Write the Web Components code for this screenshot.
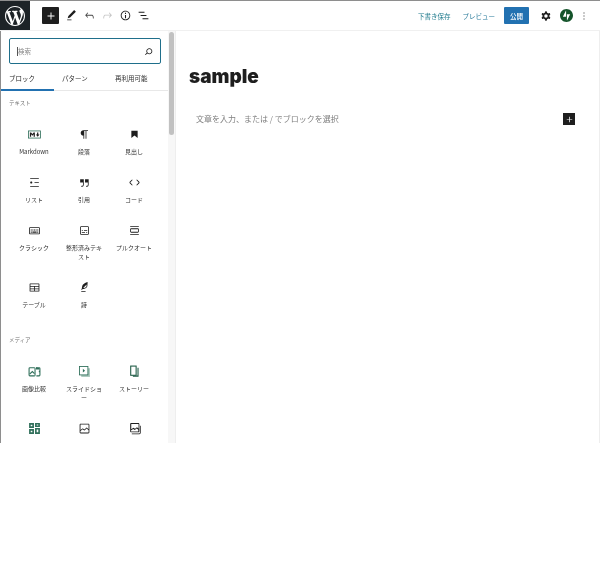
<!DOCTYPE html>
<html lang="ja">
<head>
<meta charset="utf-8">
<title>sample</title>
<style>
html,body{margin:0;padding:0;background:#fff}
body{font-family:"Liberation Sans","Noto Sans CJK JP",sans-serif;color:#1e1e1e}
</style>
</head>
<body>
<wp-editor-app></wp-editor-app>
<script>
const PATHS={
plus:'M18 11.2h-5.2V6h-1.6v5.2H6v1.6h5.2V18h1.6v-5.2H18z',
pencil:'M20.1 5.1L16.9 2 6.2 12.7l-1.3 4.4 4.5-1.3L20.1 5.1zM4 20.8h8v-1.5H4v1.5z',
undo:'M18.3 11.7c-.6-.6-1.4-.9-2.3-.9H6.7l2.9-3.3-1.1-1-4.5 5L8.5 16l1-1-2.7-2.7H16c.5 0 .9.2 1.3.5 1 1 1 3.4 1 4.5v.3h1.5v-.2c0-1.5 0-4.3-1.5-5.7z',
redo:'M15.6 6.5l-1.1 1 2.9 3.3H8c-.9 0-1.7.3-2.3.9-1.4 1.5-1.4 4.2-1.4 5.6v.2h1.5v-.3c0-1.1 0-3.5 1-4.5.3-.3.7-.5 1.3-.5h9.2L14.5 15l1.1 1.1 4.6-4.6-4.6-5z',
info:'M12 3.2c-4.8 0-8.8 3.9-8.8 8.8 0 4.8 3.9 8.8 8.8 8.8 4.8 0 8.8-3.9 8.8-8.8 0-4.8-4-8.8-8.8-8.8zm0 16c-4 0-7.2-3.3-7.2-7.2C4.8 8 8 4.8 12 4.8s7.2 3.3 7.2 7.2c0 4-3.2 7.2-7.2 7.2zM11 17h2v-6h-2v6zm0-8h2V7h-2v2z',
listview:'M13.8 5.2H3v1.5h10.8V5.2zm-3.6 12v1.5H21v-1.5H10.2zm7.2-6H6.6v1.5h10.8v-1.5z',
cog:'M10.289 4.836A1 1 0 0111.275 4h1.306a1 1 0 01.987.836l.244 1.466c.787.26 1.503.679 2.108 1.218l1.393-.522a1 1 0 011.216.437l.653 1.13a1 1 0 01-.23 1.273l-1.148.944a6.025 6.025 0 010 2.435l1.149.946a1 1 0 01.23 1.272l-.653 1.13a1 1 0 01-1.216.437l-1.394-.522c-.605.54-1.32.958-2.108 1.218l-.244 1.466a1 1 0 01-.987.836h-1.306a1 1 0 01-.986-.836l-.244-1.466a5.995 5.995 0 01-2.108-1.218l-1.394.522a1 1 0 01-1.217-.436l-.653-1.131a1 1 0 01.23-1.272l1.149-.946a6.026 6.026 0 010-2.435l-1.148-.944a1 1 0 01-.23-1.272l.653-1.131a1 1 0 011.217-.437l1.393.522a5.994 5.994 0 012.108-1.218l.244-1.466zM14.929 12a3 3 0 11-6 0 3 3 0 016 0z',
dots:'M13 19h-2v-2h2v2zm0-6h-2v-2h2v2zm0-6h-2V5h2v2z',
search:'M13.5 6C10.5 6 8 8.5 8 11.5c0 1.1.3 2.1.9 3l-3.4 3 1 1.1 3.4-2.9c1 .9 2.2 1.4 3.6 1.4 3 0 5.5-2.5 5.5-5.5C19 8.5 16.5 6 13.5 6zm0 9.5c-2.2 0-4-1.8-4-4s1.8-4 4-4 4 1.8 4 4-1.8 4-4 4z',
paragraph:'M9.99609 14v-.2251l.00391.0001v6.225h1.5v-14.5h2.5v14.5h1.5v-14.5h3v-1.5h-8.50391c-2.76142 0-5 2.23858-5 5 0 2.7614 2.23858 5 5 5z',
heading:'M6.2 5.2v13.4l5.8-4.8 5.8 4.8V5.2z',
list:'M4 4v1.5h16V4H4zm8 8.5h8V11h-8v1.5zM4 20h16v-1.5H4V20zm4-8c0-1.1-.9-2-2-2s-2 .9-2 2 .9 2 2 2 2-.9 2-2z',
quote:'M13 6v6h5.2v4c0 .8-.2 1.4-.5 1.7-.6.6-1.6.6-2.5.5h-.3v1.5h.5c1 0 2.3-.1 3.3-1 .6-.6 1-1.6 1-2.8V6H13zm-9 6h5.2v4c0 .8-.2 1.4-.5 1.7-.6.6-1.6.6-2.5.5h-.3v1.5h.5c1 0 2.3-.1 3.3-1 .6-.6 1-1.6 1-2.8V6H4v6z',
code:'M20.8 10.7l-4.3-4.3-1.1 1.1 4.3 4.3c.1.1.1.3 0 .4l-4.3 4.3 1.1 1.1 4.3-4.3c.7-.8.7-1.9 0-2.6zM4.2 11.8l4.3-4.3-1-1-4.3 4.3c-.7.7-.7 1.8 0 2.5l4.3 4.3 1.1-1.1-4.3-4.3c-.2-.1-.2-.3-.1-.4z',
classic:'M20 6H4c-1.1 0-2 .9-2 2v9c0 1.1.9 2 2 2h16c1.1 0 2-.9 2-2V8c0-1.1-.9-2-2-2zm.5 11c0 .3-.2.5-.5.5H4c-.3 0-.5-.2-.5-.5V8c0-.3.2-.5.5-.5h16c.3 0 .5.2.5.5v9zM10 10H8v2h2v-2zm-5 2h2v-2H5v2zm8-2h-2v2h2v-2zm-5 6h8v-2H8v2zm6-4h2v-2h-2v2zm3 0h2v-2h-2v2zm0 4h2v-2h-2v2zM5 16h2v-2H5v2z',
preformatted:'M18 4H6c-1.1 0-2 .9-2 2v12c0 1.1.9 2 2 2h12c1.1 0 2-.9 2-2V6c0-1.1-.9-2-2-2zm.5 14c0 .3-.2.5-.5.5H6c-.3 0-.5-.2-.5-.5V6c0-.3.2-.5.5-.5h12c.3 0 .5.2.5.5v12zM7 16.5h6V15H7v1.5zm4-4h6V11h-6v1.5zM9 11H7v1.5h2V11zm6 5.5h2V15h-2v1.5z',
pullquote:'M18 8H6c-1.1 0-2 .9-2 2v4c0 1.1.9 2 2 2h12c1.1 0 2-.9 2-2v-4c0-1.1-.9-2-2-2zm.5 6c0 .3-.2.5-.5.5H6c-.3 0-.5-.2-.5-.5v-4c0-.3.2-.5.5-.5h12c.3 0 .5.2.5.5v4zM4 4v1.5h16V4H4zm0 16h16v-1.5H4V20z',
table:'M4 4.5h16c.6 0 1 .4 1 1v13c0 .6-.4 1-1 1H4c-.6 0-1-.4-1-1v-13c0-.6.4-1 1-1zm.5 1.5v3h15V6h-15zm0 4.5v3.2h6.7v-3.2H4.500zm8.200 0v3.200h6.800v-3.200h-6.800zm-8.200 4.700V18h6.700v-2.800H4.500zm8.200 0V18h6.800v-2.800h-6.800z',
verse:'M17.8 2l-.9.3c-.1 0-3.6 1-5.2 2.1C10 5.5 9.3 6.5 8.9 7.1c-.6.9-1.7 4.7-1.7 6.3l-.9 2.3c-.2.4 0 .8.4 1 .1 0 .2.1.3.1.3 0 .6-.2.7-.5l.6-1.5c.3 0 .7-.1 1.2-.2.7-.1 1.4-.3 2.2-.5.8-.2 1.6-.5 2.4-.8.7-.3 1.4-.7 1.9-1.2s.8-1.2 1-1.9c.2-.7.3-1.6.4-2.4.1-.8.1-1.7.2-2.5 0-.8.1-1.5.2-2.1V2zm-1.900 5.600c-.1.8-.2 1.500-.3 2.100-.2.6-.4 1-.6 1.300-.3.3-.8.6-1.400.9-.7.3-1.400.5-2.200.8-.6.2-1.300.3-1.800.4L15 7.500c.3-.3.6-.7 1-1.100 0 .4 0 .8-.1 1.200zM6 20h8v-1.500H6V20z',
image:'M19 3H5c-1.100 0-2 .9-2 2v14c0 1.100.9 2 2 2h14c1.100 0 2-.9 2-2V5c0-1.100-.9-2-2-2zM5 4.500h14c.3 0 .5.2.5.5v8.400l-3-2.900c-.3-.3-.8-.3-1 0L11.900 14 9 12c-.3-.2-.6-.2-.8 0l-3.600 2.600V5c-.1-.3.1-.5.400-.5zm14 15H5c-.3 0-.5-.2-.5-.5v-2.400l4.100-3 3 1.900c.3.2.7.2.9-.1L16 12l3.500 3.400V19c0 .3-.2.5-.5.5z',
imagedoc:'M19 2H6c-1.100 0-2 .9-2 2v13c0 1.100.9 2 2 2h13c1.100 0 2-.9 2-2V4c0-1.100-.9-2-2-2zM6 3.500h13c.3 0 .5.2.5.5v8l-3-2.500-3.500 3-3-2-4 2.800V4c0-.3.2-.5.500-.5zm13 14H6c-.3 0-.5-.2-.5-.5v-1.200l4-2.900 3 2 3.500-3 3 2.600V17c0 .3-.2.500-.5.500zM22 7v13c0 .5-.5 1-1 1H7v1.500h14c1.400 0 2.500-1.100 2.500-2.500V7H22z'
};
class WpIcon extends HTMLElement{
  connectedCallback(){
    const n=this.getAttribute('name'),s=this.getAttribute('size')||12,c=this.getAttribute('color')||'#1e1e1e';
    this.attachShadow({mode:'open'}).innerHTML=`<style>:host{display:inline-flex;align-items:center;justify-content:center;width:${s}px;height:${s}px;flex:none}svg{display:block}</style>
    <svg width="${s}" height="${s}" viewBox="0 0 24 24" fill="${c}"><path fill-rule="evenodd" d="${PATHS[n]||''}"/></svg>`;
  }
}
customElements.define('wp-icon',WpIcon);

class WpCustomIcon extends HTMLElement{
  connectedCallback(){
    const G='#2f6f5a';
    const m={
      markdown:`<svg width="13" height="9" viewBox="0 0 208 128"><rect x="7" y="7" width="194" height="114" fill="none" stroke="${G}" stroke-width="13"/><path fill="#1e1e1e" d="M30 98V30h20l20 25 20-25h20v68H90V59L70 84 50 59v39zm125 0l-30-33h20V30h20v35h20z"/></svg>`,
      compare:`<svg width="13" height="13" viewBox="0 0 24 24" fill="none" stroke="${G}" stroke-width="2"><rect x="2" y="5" width="20" height="15" rx="1.500"/><path d="M14 2v20" stroke="#fff" stroke-width="3"/><path d="M13 5v15"/><path d="M3 17l5-5 4 4"/><path d="M16 4v3h5M20 12h2" stroke-width="2.500"/></svg>`,
      slideshow:`<svg width="13" height="13" viewBox="0 0 24 24" fill="none"><rect x="6" y="6" width="16" height="16" fill="#a8c7bb"/><rect x="2.800" y="2.800" width="15.500" height="15.500" fill="#fff" stroke="${G}" stroke-width="1.600"/><path d="M9 7l4 3.500L9 14z" fill="${G}"/></svg>`,
      story:`<svg width="13" height="13" viewBox="0 0 24 24" fill="none" stroke="#1f5b45" stroke-width="2"><rect x="5" y="2" width="10" height="17"/><path d="M18.500 5v15.500H9"/></svg>`,
      mosaic:`<svg width="13" height="13" viewBox="0 0 24 24" fill="${G}"><path fill-rule="evenodd" d="M2 2h9v9H2zM5 5v3h3V5zM13 2h9v7h-9zM16 4.500v2h3v-2zM2 13h9v9H2zM5 16v3h3v-3zM13 11h9v11h-9zM16 14v5h3v-5z"/></svg>`
    };
    this.attachShadow({mode:'open'}).innerHTML=`<style>:host{display:inline-flex;align-items:center;justify-content:center;width:13px;height:13px}svg{display:block}</style>${m[this.getAttribute('name')]}`;
  }
}
customElements.define('wp-custom-icon',WpCustomIcon);

class WpTopBar extends HTMLElement{
  constructor(){
    super();
    this.attachShadow({mode:'open'}).innerHTML=`<style>
    :host{display:flex;align-items:center;height:30px;box-sizing:border-box;border-bottom:1px solid #f0f0f0;background:#fff;font-family:"Noto Sans CJK JP","Liberation Sans",sans-serif}
    .logo{width:30px;height:29px;background:#1d2327;display:flex;align-items:center;justify-content:center}
    .add{width:17px;height:17px;margin-left:12px;background:#1e1e1e;border-radius:1px;display:flex;align-items:center;justify-content:center}
    .tools{display:flex;margin-left:3px}
    .tool{width:18px;height:18px;display:flex;align-items:center;justify-content:center}
    .right{margin-left:auto;display:flex;align-items:center;padding-right:10px}
    .link{font-size:6.500px;color:#1f7a8c;line-height:10px;white-space:nowrap}
    .prev{margin-left:12px;color:#2a7b9b}
    .pub{margin-left:9px;width:25px;height:17px;background:#2271b1;color:#fff;font-size:6.500px;font-weight:500;display:flex;align-items:center;justify-content:center;border-radius:1px}
    .gear{margin-left:10px}
    .jet{margin-left:6.500px;width:13px;height:13px}
    .more{margin-left:5.500px}
    </style>
    <div class="logo"><svg width="20" height="20" viewBox="0 0 20 20" fill="#fff"><path d="M20 10c0-5.510-4.490-10-10-10C4.480 0 0 4.490 0 10c0 5.520 4.480 10 10 10 5.510 0 10-4.480 10-10zM7.780 15.370L4.370 6.220c.55-.02 1.170-.08 1.170-.08.5-.06.44-1.130-.06-1.110 0 0-1.450.11-2.370.11-.18 0-.37 0-.58-.01C4.120 2.690 6.870 1.110 10 1.110c2.330 0 4.450.87 6.050 2.340-.68-.11-1.650.39-1.650 1.580 0 .74.45 1.360.9 2.100.35.61.55 1.360.55 2.460 0 1.490-1.400 5-1.400 5l-3.030-8.370c.54-.02.82-.17.82-.17.5-.05.44-1.250-.06-1.220 0 0-1.440.12-2.380.12-.87 0-2.330-.12-2.330-.12-.5-.03-.56 1.200-.06 1.220l.92.08 1.260 3.410zM17.410 10c.24-.64.74-1.870.43-4.250.7 1.290 1.050 2.710 1.050 4.250 0 3.290-1.730 6.240-4.400 7.780.97-2.590 1.940-5.200 2.920-7.780zM6.100 18.090C3.120 16.650 1.110 13.530 1.110 10c0-1.300.23-2.480.72-3.590C3.250 10.300 4.670 14.200 6.100 18.090zm4.030-6.630l2.580 6.980c-.86.29-1.760.45-2.710.45-.79 0-1.570-.11-2.290-.33.81-2.380 1.620-4.740 2.420-7.100z"/></svg></div>
    <div class="add"><wp-icon name="plus" size="14" color="#fff"></wp-icon></div>
    <div class="tools">
      <div class="tool"><wp-icon name="pencil" size="13"></wp-icon></div>
      <div class="tool"><wp-icon name="undo" size="13" color="#444"></wp-icon></div>
      <div class="tool"><wp-icon name="redo" size="13" color="#c4c4c4"></wp-icon></div>
      <div class="tool"><wp-icon name="info" size="13"></wp-icon></div>
      <div class="tool"><wp-icon name="listview" size="13"></wp-icon></div>
    </div>
    <div class="right">
      <span class="link">下書き保存</span>
      <span class="link prev">プレビュー</span>
      <span class="pub">公開</span>
      <wp-icon class="gear" name="cog" size="14"></wp-icon>
      <svg class="jet" viewBox="0 0 32 32"><path fill="#14532a" d="M16 0C7.200 0 0 7.200 0 16s7.200 16 16 16 16-7.200 16-16S24.800 0 16 0zM15 19H7l8-16v16zm2 10V13h8l-8 16z"/></svg>
      <wp-icon class="more" name="dots" size="12" color="#333"></wp-icon>
    </div>`;
  }
}
customElements.define('wp-top-bar',WpTopBar);

class WpSearchBox extends HTMLElement{
  constructor(){
    super();
    this.attachShadow({mode:'open'}).innerHTML=`<style>
    :host{display:flex;align-items:center;width:152px;height:26px;box-sizing:border-box;margin-left:8px;border:1px solid #1f6f8b;border-radius:2px;background:#fff;padding:0 5px 0 7px}
    .caret{width:1px;height:9px;background:#555;flex:none}
    .ph{font-size:6.500px;color:#8a8a8a;flex:1;line-height:10px}
    </style><span class="caret"></span><span class="ph"><slot></slot></span><wp-icon name="search" size="13"></wp-icon>`;
  }
}
customElements.define('wp-search-box',WpSearchBox);

class WpTabs extends HTMLElement{
  constructor(){
    super();
    this.attachShadow({mode:'open'}).innerHTML=`<style>
    :host{display:flex;height:27px;box-sizing:border-box;border-bottom:1px solid #e8e8e8}
    .t{width:53px;box-sizing:border-box;padding:9px 0 0 8px;font-size:6.500px;line-height:10px;color:#333;white-space:nowrap;height:27px}
    .on{border-bottom:2px solid #2271b1;color:#1e1e1e}
    </style><div class="t on">ブロック</div><div class="t">パターン</div><div class="t">再利用可能</div>`;
  }
}
customElements.define('wp-tabs',WpTabs);

class WpBlockItem extends HTMLElement{
  constructor(){
    super();
    this.attachShadow({mode:'open'}).innerHTML=`<style>
    :host{display:flex;flex-direction:column;align-items:center;width:50px;padding-bottom:20px}
    .i{height:12px;display:flex;align-items:center;justify-content:center}
    .l{margin-top:7px;width:40px;text-align:center;font-size:6px;line-height:9px;color:#333;overflow-wrap:anywhere}
    </style><div class="i"><slot name="icon"></slot></div><div class="l"><slot></slot></div>`;
  }
}
customElements.define('wp-block-item',WpBlockItem);

class WpBlockGroup extends HTMLElement{
  constructor(){
    super();
    this.attachShadow({mode:'open'}).innerHTML=`<style>
    :host{display:block;padding-left:8px}
    .h{font-size:5.500px;line-height:8px;color:#757575;margin-bottom:21px}
    .g{display:grid;grid-template-columns:repeat(3,50px)}
    </style><div class="h">${this.getAttribute('label')}</div><div class="g"><slot></slot></div>`;
  }
}
customElements.define('wp-block-group',WpBlockGroup);

class WpInserter extends HTMLElement{
  constructor(){
    super();
    const item=(ic,t)=>`<wp-block-item><wp-icon slot="icon" name="${ic}" size="13"></wp-icon>${t}</wp-block-item>`;
    const cust=(ic,t)=>`<wp-block-item><wp-custom-icon slot="icon" name="${ic}"></wp-custom-icon>${t}</wp-block-item>`;
    this.attachShadow({mode:'open'}).innerHTML=`<style>
    :host{display:flex;width:176px;height:413px;flex:none;box-sizing:border-box;border-left:1px solid #8e8e8e;border-right:1px solid #eeeeee;overflow:hidden;background:#fff;font-family:"Noto Sans CJK JP","Liberation Sans",sans-serif}
    .panel{width:167px;flex:none;padding-top:7px;box-sizing:border-box;height:413px;overflow:hidden}
    .list{padding-top:8px}
    .sec{margin-top:7px}
    .track{width:7px;flex:1;background:#f7f7f7;padding:1px 0 0 1px;box-sizing:border-box}
    .thumb{width:5px;height:103px;background:#c1c1c1;border-radius:3px}
    </style>
    <div class="panel">
      <wp-search-box>検索</wp-search-box>
      <wp-tabs></wp-tabs>
      <div class="list">
      <wp-block-group label="テキスト">
        <wp-block-item><wp-custom-icon slot="icon" name="markdown"></wp-custom-icon>Markdown</wp-block-item>
        ${item('paragraph','段落')}${item('heading','見出し')}
        ${item('list','リスト')}${item('quote','引用')}${item('code','コード')}
        ${item('classic','クラシック')}${item('preformatted','整形済みテキスト')}${item('pullquote','プルクオート')}
        ${item('table','テーブル')}${item('verse','詩')}
      </wp-block-group>
      <wp-block-group class="sec" label="メディア">
        ${cust('compare','画像比較')}${cust('slideshow','スライドショー')}${cust('story','ストーリー')}
        ${cust('mosaic','')}${item('image','')}${item('imagedoc','')}
      </wp-block-group>
      </div>
    </div>
    <div class="track"><div class="thumb"></div></div>`;
  }
}
customElements.define('wp-inserter',WpInserter);

class WpCanvas extends HTMLElement{
  constructor(){
    super();
    this.attachShadow({mode:'open'}).innerHTML=`<style>
    :host{display:block;flex:1;height:413px;box-sizing:border-box;border-right:1px solid #eeeeee;padding:34px 24px 0 13px;background:#fff}
    h1{margin:0;font:900 19px/24px Inter,"Liberation Sans",sans-serif;color:#1e1e1e}
    .row{display:flex;align-items:center;justify-content:space-between;margin-top:24px;padding-left:7px;height:12px}
    .ph{font:8px/12px "Noto Sans CJK JP","Liberation Sans",sans-serif;color:#808080}
    .add{width:12px;height:12px;background:#1e1e1e;display:flex;align-items:center;justify-content:center}
    </style><h1>sample</h1><div class="row"><span class="ph">文章を入力、または / でブロックを選択</span><span class="add"><wp-icon name="plus" size="11" color="#fff"></wp-icon></span></div>`;
  }
}
customElements.define('wp-canvas',WpCanvas);

class WpEditorApp extends HTMLElement{
  constructor(){
    super();
    this.attachShadow({mode:'open'}).innerHTML=`<style>
    :host{display:block;height:443px;box-sizing:border-box;border-top:1px solid #8e8e8e;background:#fff;overflow:hidden;filter:blur(.3px)}
    .main{display:flex}
    </style><wp-top-bar></wp-top-bar><div class="main"><wp-inserter></wp-inserter><wp-canvas></wp-canvas></div>`;
  }
}
customElements.define('wp-editor-app',WpEditorApp);
</script>
</body>
</html>
